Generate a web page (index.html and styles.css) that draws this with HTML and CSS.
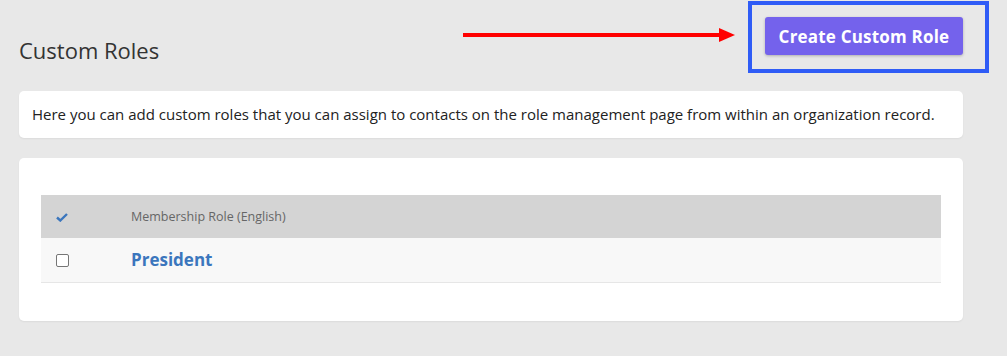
FILE: index.html
```html
<!DOCTYPE html>
<html lang="en">
<head>
<meta charset="utf-8">
<title>Custom Roles</title>
<link rel="stylesheet" href="styles.css">
</head>
<body>
<div class="page">
  <div class="page-header">
    <h1 class="title">Custom Roles</h1>
    <div class="action">
      <span class="arrow" aria-hidden="true">
        <svg width="272" height="16" viewBox="0 0 272 16"><rect x="0" y="5" width="258" height="4" fill="#ff0000"/><polygon points="256,0 272,7 256,14" fill="#ff0000"/></svg>
      </span>
      <span class="highlight" aria-hidden="true"></span>
      <button class="btn-primary" type="button">Create Custom Role</button>
    </div>
  </div>

  <div class="card intro">
    Here you can add custom roles that you can assign to contacts on the role management page from within an organization record.
  </div>

  <div class="card table-card">
    <table class="roles">
      <thead>
        <tr>
          <th class="col-check">
            <svg width="12" height="9" viewBox="0 0 12 9"><path d="M1 4.5 L4.3 7.5 L11 1" fill="none" stroke="#3b76bd" stroke-width="2.4"/></svg>
          </th>
          <th class="col-name">Membership Role (English)</th>
        </tr>
      </thead>
      <tbody>
        <tr>
          <td class="col-check"><span class="checkbox"></span></td>
          <td class="col-name"><a class="role-link" href="#">President</a></td>
        </tr>
      </tbody>
    </table>
  </div>
</div>
</body>
</html>
```
FILE: styles.css
```css
* { box-sizing: border-box; }
html, body { margin: 0; padding: 0; }
body {
  background: #e8e8e8;
  font-family: "Open Sans", "Liberation Sans", sans-serif;
  color: #333;
}
.page {
  width: 1007px;
  height: 356px;
  padding: 17px 44px 0 19px;
}
.page-header {
  display: flex;
  justify-content: space-between;
  align-items: flex-start;
  height: 74px;
}
.title {
  margin: 18px 0 0 0;
  font-size: 22px;
  font-weight: 400;
  color: #333;
  line-height: 30px;
}
.action {
  position: relative;
}
.btn-primary {
  display: block;
  height: 38px;
  width: 198px;
  border: none;
  border-radius: 3px;
  background: #7462ec;
  color: #fff;
  font-family: "Open Sans", "Liberation Sans", sans-serif;
  font-weight: 700;
  font-size: 17px;
  letter-spacing: 0.2px;
  box-shadow: 0 1px 3px rgba(0,0,0,0.25);
  padding: 0;
}
.highlight {
  position: absolute;
  left: -17px;
  top: -16px;
  width: 241px;
  height: 72px;
  border: 4px solid #2f5cf6;
}
.arrow {
  position: absolute;
  left: -302px;
  top: 11px;
  display: block;
  line-height: 0;
}
.card {
  background: #fff;
  border-radius: 5px;
  box-shadow: 0 1px 2px rgba(0,0,0,0.06);
}
.intro {
  height: 47px;
  padding: 0 13px;
  font-size: 15px;
  line-height: 47px;
  color: #222;
  white-space: nowrap;
}
.table-card {
  margin-top: 20px;
  height: 163px;
  padding: 37px 22px 0 22px;
}
.roles {
  width: 100%;
  border-collapse: collapse;
}
.roles th {
  background: #d4d4d4;
  height: 43px;
  text-align: left;
  font-weight: 400;
  font-size: 12.5px;
  color: #666;
  padding: 0;
}
.roles td {
  background: #f8f8f8;
  height: 44px;
  border-bottom: 1px solid #e6e6e6;
  padding: 0;
}
.col-check {
  width: 90px;
  padding-left: 15px !important;
}
.col-check svg { display: block; margin-top: 2px; }
.checkbox {
  display: block;
  width: 13px;
  height: 13px;
  border: 1px solid #767676;
  border-radius: 2px;
  background: #fff;
  margin-top: 1px;
}
.role-link {
  color: #3b76bd;
  font-weight: 700;
  font-size: 17px;
  text-decoration: none;
}
```
